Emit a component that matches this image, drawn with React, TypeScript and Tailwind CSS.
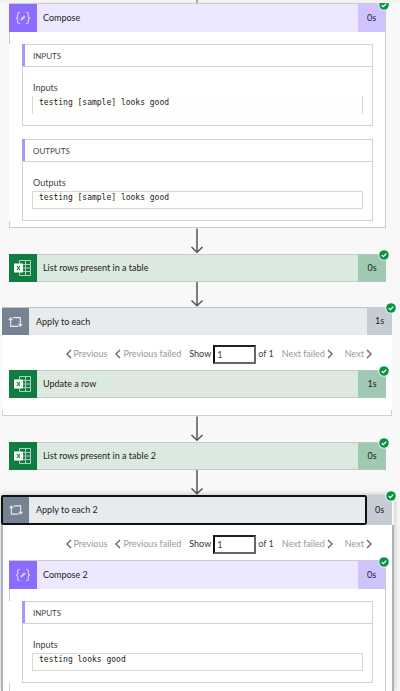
import { useId, useState } from 'react';
import type { ReactNode } from 'react';

function ComposeIcon() {
    return (
        <svg className="w-7 h-7" viewBox="0 0 28 28" fill="none" stroke="#d9cfff" strokeWidth={1.2} aria-hidden="true">
            <path d="M11 8.5h-.8c-1.1 0-1.5.6-1.5 1.5v2.2c0 1-.6 1.6-1.7 1.8 1.1.2 1.7.8 1.7 1.8V18c0 .9.4 1.5 1.5 1.5h.8" />
            <path d="M17 8.5h.8c1.1 0 1.5.6 1.5 1.5v2.2c0 1 .6 1.6 1.7 1.8-1.1.2-1.7.8-1.7 1.8V18c0 .9-.4 1.5-1.5 1.5H17" />
            <path d="M11.8 16.2l.4-1.6 2.9-2.9 1.2 1.2-2.9 2.9z" fill="#d9cfff" strokeWidth={0.6} />
        </svg>
    );
}

function ExcelIcon() {
    return (
        <svg className="w-7 h-7" viewBox="0 0 28 28" fill="none" aria-hidden="true">
            <path d="M10.5 6.5h11v15h-11z M10.5 10.5h11 M10.5 14h11 M10.5 17.5h11 M16.5 6.5v15" stroke="#a9d3bd" strokeWidth={1} />
            <path d="M5 9.5h9v9H5z" fill="#ffffff" />
            <path d="M7.9 11.7l3.2 4.6 M11.1 11.7l-3.2 4.6" stroke="#107c41" strokeWidth={1.1} />
        </svg>
    );
}

function LoopIcon() {
    return (
        <svg className="w-7 h-7" viewBox="0 0 28 28" fill="none" stroke="#e6eaee" strokeWidth={1.2} aria-hidden="true">
            <path d="M9 10v8.5h8" />
            <path d="M11.5 9.5h7.5v8.5" />
            <path d="M7 12l2-2.2 2 2.2" />
            <path d="M17 16l2 2.2 2-2.2" />
        </svg>
    );
}

function StatusBadge({ className }: { className: string }) {
    return (
        <svg className={`absolute -top-[5px] w-3 h-3 z-10 ${className}`} viewBox="0 0 12 12" role="img" aria-label="Succeeded">
            <circle cx="6" cy="6" r="5.6" fill="#ffffff" />
            <circle cx="6" cy="6" r="4.8" fill="#0a9347" />
            <path d="M3.7 6.1l1.6 1.6 3-3.1" fill="none" stroke="#ffffff" strokeWidth={1.2} />
        </svg>
    );
}

function Arrow({ className }: { className: string }) {
    return (
        <div className={`flex justify-center ${className}`}>
            <svg className="w-4 h-full" viewBox="0 0 16 25" fill="none" stroke="#555555" strokeWidth={1.5} aria-hidden="true">
                <path d="M8 0v23.5" />
                <path d="M2.5 18.5l5.5 5.3 5.5-5.3" />
            </svg>
        </div>
    );
}

function Chevron({ direction }: { direction: 'left' | 'right' }) {
    return (
        <svg className="w-[6px] h-[10px]" viewBox="0 0 6 10" fill="none" stroke="#666666" strokeWidth={1.4} aria-hidden="true">
            <path d={direction === 'left' ? 'M5 1L1 5l4 4' : 'M1 1l4 4-4 4'} />
        </svg>
    );
}

function ActionRow({ title, time }: { title: string; time: string }) {
    return (
        <div className="relative flex h-7 ml-[7px] mr-[6px] bg-[#107c41]">
            <ExcelIcon />
            <button className="flex-1 border-y border-[#c3cdc8] bg-[#dbe9e1] pl-[6px] text-left">{title}</button>
            <span className="flex w-7 items-center justify-center border-y border-[#b4c6bc] bg-[#9fc9b3]">{time}</span>
            <StatusBadge className="-right-1" />
        </div>
    );
}

type Field = {
    heading: string;
    label: string;
    value: string;
    open?: boolean;
};

function FieldPanel({ heading, label, value, open }: Field) {
    const id = useId();

    return (
        <section className="border border-[#d2d2d2] bg-white">
            <h3 className="relative flex h-[22px] items-center border-b border-[#d2d2d2] pl-[10px] text-[8px] text-[#444444]">
                <span className="absolute -left-px -top-px h-[22px] w-[3px] bg-[#ad94fb]" />
                {heading}
            </h3>
            <div className="flex flex-col px-[9px] pt-[13px] pb-[11px]">
                <label htmlFor={id} className="pl-px leading-4 text-[#444444]">{label}</label>
                <textarea
                    id={id}
                    readOnly
                    rows={1}
                    value={value}
                    className={`h-[18px] w-full resize-none overflow-hidden border-x border-[#d8d8d8] bg-[#fefefc] pl-[6px] font-['DejaVu_Sans_Mono',monospace] text-[8px] leading-3 text-[#222222] outline-none ${open ? 'pt-px' : 'border-y'}`}
                />
            </div>
        </section>
    );
}

function ComposeCard({ title, time, fields, last }: { title: string; time: string; fields: Field[]; last?: boolean }) {
    return (
        <div className={`ml-[7px] mr-[6px] border-t border-x border-[#cccccc] bg-white ${last ? 'flex-1' : 'border-b pb-[6px]'}`}>
            <div className="relative -ml-px flex h-7 bg-[#8c6cff]">
                <ComposeIcon />
                <button className="flex-1 bg-[#ede8ff] pl-[6px] text-left">{title}</button>
                <span className="flex w-[27px] items-center justify-center bg-[#cfc4ff]">{time}</span>
                <StatusBadge className="-right-[5px]" />
            </div>
            <div className="relative mt-3 -ml-px flex flex-col gap-[13px] bg-white pl-[13px] pr-3">
                {fields.map((field) => (
                    <FieldPanel key={field.heading} {...field} />
                ))}
            </div>
        </div>
    );
}

function Pager() {
    const id = useId();
    const [page, setPage] = useState('1');

    return (
        <div className="flex h-[35px] items-center justify-end pr-5 pt-[3px] text-[#999999]">
            <button className="mr-2 flex items-center gap-[2px]">
                <Chevron direction="left" />
                Previous
            </button>
            <button className="mr-2 flex items-center gap-[2px]">
                <Chevron direction="left" />
                Previous failed
            </button>
            <label htmlFor={id} className="mr-[2px] text-[#333333]">Show</label>
            <input
                id={id}
                value={page}
                onChange={(e) => setPage(e.target.value)}
                className="h-[19px] w-[43px] border-2 border-t-[#222222] border-l-[#111111] border-r-[#666666] border-b-[#666666] bg-white pl-[2px] text-[#444444] outline-none"
            />
            <span className="ml-[2px] mr-2 text-[#444444]">of 1</span>
            <button className="mr-3 flex items-center gap-[2px]">
                Next failed
                <Chevron direction="right" />
            </button>
            <button className="flex items-center gap-[2px]">
                Next
                <Chevron direction="right" />
            </button>
        </div>
    );
}

function LoopHeader({ title, time, selected }: { title: string; time: string; selected?: boolean }) {
    return (
        <div className={`relative flex ${selected ? 'h-[30px]' : 'h-7'}`}>
            <div className={`flex flex-1 items-center bg-[#e8ebee] ${selected ? '-ml-px rounded-xs border-2 border-[#111111]' : 'border-t border-[#c0c5ca]'}`}>
                <span className={`flex h-full items-center bg-[#748292] ${selected ? 'w-[26px]' : 'w-[27px]'}`}>
                    <LoopIcon />
                </span>
                <button className="flex-1 self-stretch pl-[7px] text-left">{title}</button>
            </div>
            <span className="flex w-[25px] items-center justify-center bg-[#c5ccd4]">{time}</span>
            <StatusBadge className="-right-[5px]" />
        </div>
    );
}

function LoopBody({ children }: { children: ReactNode }) {
    return (
        <div className="border-x border-b border-[#d0d0d0] bg-white">
            <div className="-mx-px mt-1 mb-[5px] bg-white">
                <div className="-mt-1">{children}</div>
                <div className="h-3" />
            </div>
        </div>
    );
}

export default function App() {
    return (
        <main className="flex min-h-screen flex-col bg-[#f8f8f8] font-[Lato,'Noto_Sans',sans-serif] text-[9px] leading-3 text-[#222222]">
            <div className="relative z-20 flex h-[3px] justify-center bg-[#f2f2f2] pr-[6px]">
                <span className="w-[2px] bg-[#aaaaaa]" />
            </div>
            <div className="flex flex-1 flex-col pl-[2px] pr-2">
                <ComposeCard
                    title="Compose"
                    time="0s"
                    fields={[
                        { heading: 'INPUTS', label: 'Inputs', value: 'testing [sample] looks good', open: true },
                        { heading: 'OUTPUTS', label: 'Outputs', value: 'testing [sample] looks good' },
                    ]}
                />
                <Arrow className="h-[26px]" />
                <ActionRow title="List rows present in a table" time="0s" />
                <Arrow className="h-[25px]" />

                {/* Apply to each */}
                <LoopHeader title="Apply to each" time="1s" />
                <LoopBody>
                    <Pager />
                    <ActionRow title="Update a row" time="1s" />
                </LoopBody>
                <Arrow className="h-[26px]" />
                <ActionRow title="List rows present in a table 2" time="0s" />
                <Arrow className="h-[25px]" />

                {/* Apply to each 2, currently selected */}
                <div className="-mr-[2px] flex flex-1 flex-col shadow-[0_0_6px_rgba(0,0,0,0.25)]">
                    <div className="mr-[2px]">
                        <LoopHeader title="Apply to each 2" time="0s" selected />
                    </div>
                    <div className="-ml-px flex flex-1 flex-col border-x-2 border-[#a9b3bd] bg-white">
                        <div className="-ml-px flex flex-1 flex-col">
                            <Pager />
                            <ComposeCard
                                title="Compose 2"
                                time="0s"
                                last
                                fields={[{ heading: 'INPUTS', label: 'Inputs', value: 'testing looks good' }]}
                            />
                        </div>
                    </div>
                </div>
            </div>
        </main>
    );
}
